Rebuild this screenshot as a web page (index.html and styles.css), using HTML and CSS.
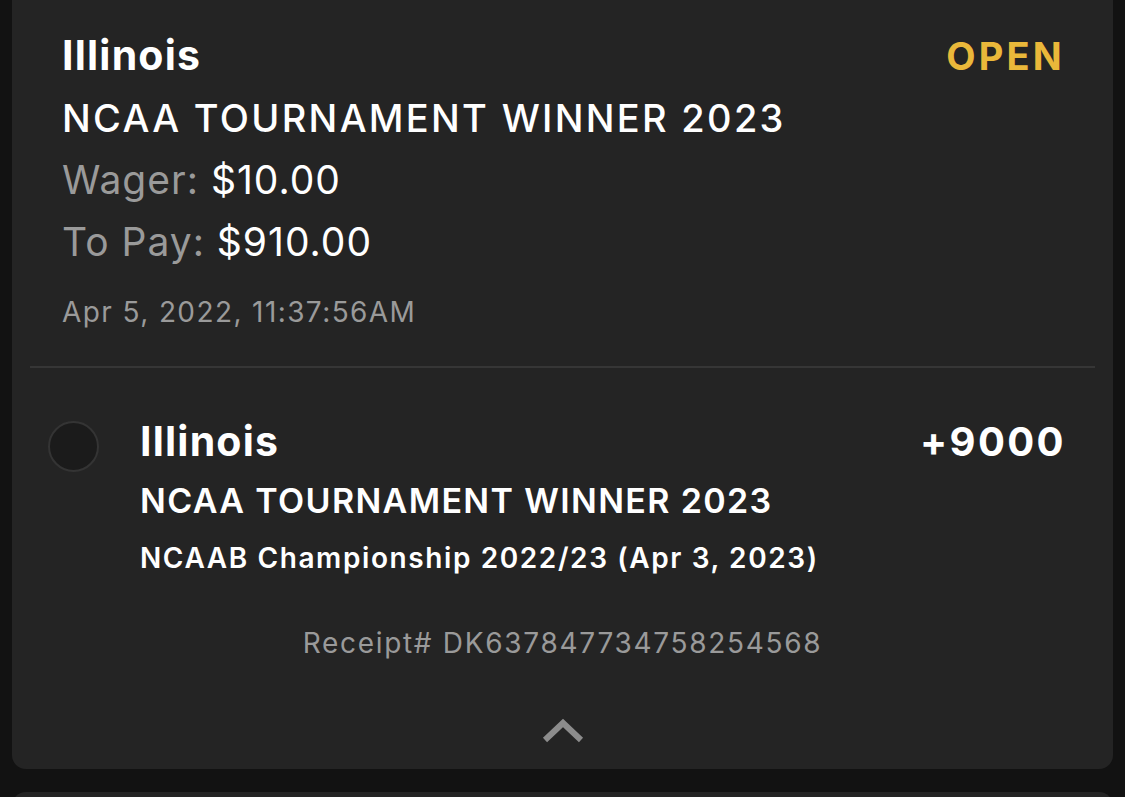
FILE: index.html
```html
<!DOCTYPE html>
<html>
	<head>
		<meta charset="UTF-8">
		<title>Bet</title>
		<link rel="stylesheet" href="styles.css">
	</head>
	<body>
		<div class="card">
			<div class="head">
				<div class="row">
					<div class="team">Illinois</div>
					<div class="status">OPEN</div>
				</div>
				<div class="market">NCAA TOURNAMENT WINNER 2023</div>
				<div class="line"><span class="label">Wager:</span> $10.00</div>
				<div class="line"><span class="label">To Pay:</span> $910.00</div>
				<div class="date">Apr 5, 2022, 11:37:56AM</div>
			</div>
			<div class="divider"></div>
			<div class="leg">
				<div class="dot"></div>
				<div class="leg-body">
					<div class="row">
						<div class="team">Illinois</div>
						<div class="odds">+9000</div>
					</div>
					<div class="leg-market">NCAA TOURNAMENT WINNER 2023</div>
					<div class="event">NCAAB Championship 2022/23 (Apr 3, 2023)</div>
				</div>
			</div>
			<div class="receipt">Receipt# DK637847734758254568</div>
			<div class="toggle">
				<svg width="42" height="26" viewBox="0 0 42 26"><path d="M3 22 L21 5 L39 22" fill="none" stroke="#8c8c8c" stroke-width="6"/></svg>
			</div>
		</div>
		<div class="card next"></div>
	</body>
</html>
```

FILE: styles.css
```css
* {
	margin: 0;
	padding: 0;
	box-sizing: border-box;
}

body {
	background: #121212;
	font-family: Inter, "Liberation Sans", sans-serif;
	color: #fff;
	padding: 0 12px;
}

.card {
	background: #242424;
	border-radius: 0 0 14px 14px;
	padding-bottom: 25px;
}

.card.next {
	margin-top: 23px;
	height: 40px;
	border-radius: 14px 14px 0 0;
}

.head {
	padding: 28px 48px 0 50px;
}

.row {
	display: flex;
	justify-content: space-between;
	align-items: baseline;
}

.team {
	font-size: 41px;
	font-weight: 700;
	line-height: 54px;
	letter-spacing: 1.2px;
}

.status {
	font-size: 38px;
	font-weight: 700;
	color: #eab83a;
	letter-spacing: 3.2px;
}

.market {
	font-size: 38px;
	font-weight: 500;
	line-height: 62px;
	margin-top: 5px;
	letter-spacing: 2.3px;
}

.line {
	font-size: 39px;
	line-height: 62px;
	letter-spacing: 1px;
}

.label {
	color: #9a9a9a;
}

.date {
	font-size: 28px;
	color: #9a9a9a;
	line-height: 40px;
	margin-top: 19px;
	letter-spacing: 1.4px;
}

.divider {
	height: 2px;
	background: #363636;
	margin: 34px 18px 0 18px;
}

.leg {
	display: flex;
	padding: 46px 47px 0 36px;
}

.dot {
	width: 51px;
	height: 51px;
	border: 2px solid #343434;
	background: #1b1b1b;
	border-radius: 50%;
	margin-right: 41px;
	margin-top: 7px;
}

.leg-body {
	flex: 1;
}

.odds {
	font-size: 40px;
	font-weight: 700;
	letter-spacing: 2.4px;
}

.leg-market {
	font-size: 34px;
	font-weight: 600;
	line-height: 58px;
	margin-top: 4px;
	letter-spacing: 1.35px;
}

.event {
	font-size: 28px;
	font-weight: 600;
	line-height: 56px;
	letter-spacing: 1.6px;
}

.receipt {
	text-align: center;
	font-size: 28px;
	color: #9a9a9a;
	margin-top: 37px;
	line-height: 40px;
	letter-spacing: 1.7px;
}

.toggle {
	display: flex;
	justify-content: center;
	margin-top: 55px;
}
```
